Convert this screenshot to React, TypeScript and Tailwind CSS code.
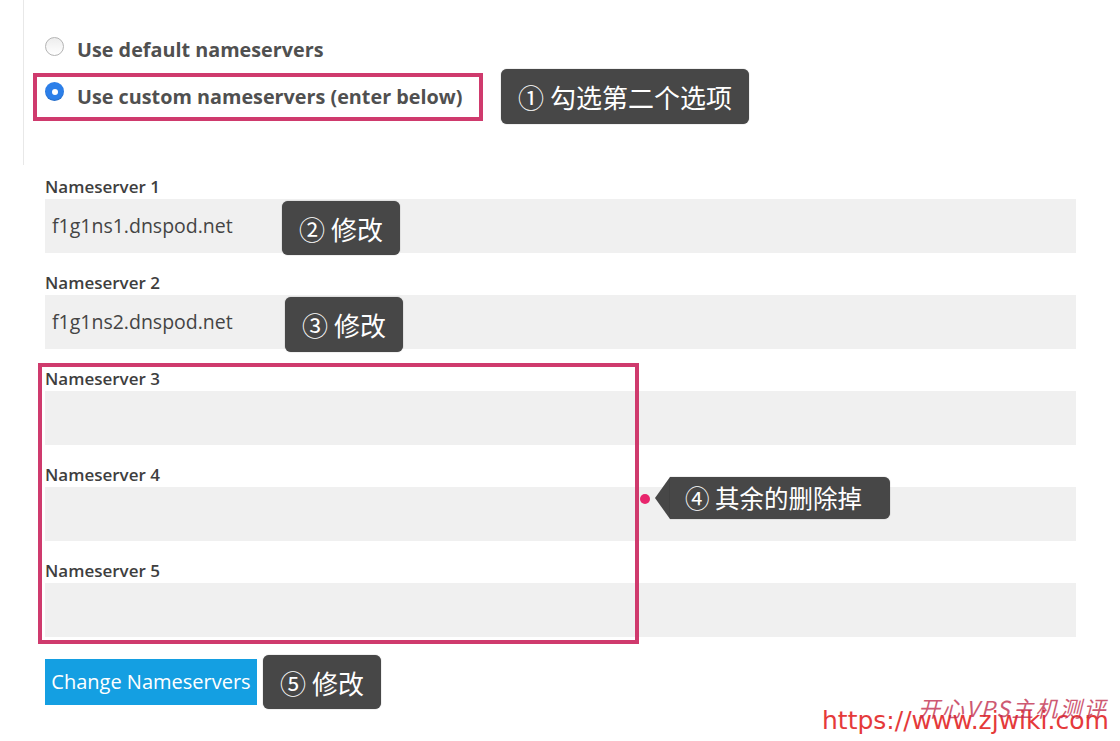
import React from 'react';

const callout =
  "flex items-center justify-center rounded-[6px] bg-[#474747] text-white font-['Noto_Sans_CJK_SC','Noto_Sans',sans-serif] shadow-[0_0_1px_rgba(0,0,0,0.6)]";

function Radio({ checked }: { checked?: boolean }) {
  return checked ? (
    <span className="flex h-[19px] w-[19px] shrink-0 items-center justify-center rounded-full bg-[#2c7fe9] shadow-[inset_0_-1px_1px_rgba(0,0,0,0.15)]">
      <span className="block h-[6px] w-[6px] rounded-full bg-white" />
    </span>
  ) : (
    <span className="block h-[19px] w-[19px] shrink-0 rounded-full border border-[#b4b4b4] bg-gradient-to-b from-[#ededed] to-white" />
  );
}

function Field({
  label,
  value,
  top = 'pt-[18px]',
  children,
}: {
  label: string;
  value?: string;
  top?: string;
  children?: React.ReactNode;
}) {
  return (
    <div className={top}>
      <div className="text-[17px] leading-[24px] font-semibold text-[#3e3e3e]">{label}</div>
      <div className="relative flex h-[54px] w-[1031px] items-center bg-[#f0f0f0] pl-[7px] text-[19.5px] text-[#444]">
        {value}
        {children}
      </div>
    </div>
  );
}

export default function App() {
  return (
    <div className="relative h-[741px] w-[1120px] overflow-hidden bg-white font-['Open_Sans',sans-serif]">
      {/* Radio choice */}
      <div className="ml-[23px] h-[165px] border-l border-[#e8e8e8] pt-[30px] pl-[9px]">
        <div className="flex h-[40px] items-center pl-[12px]">
          <span className="mb-[8px] block">
            <Radio />
          </span>
          <span className="ml-[13px] text-[19.8px] font-bold text-[#505050]">Use default nameservers</span>
        </div>
        <div className="-mt-[1px] flex items-center">
          <div className="flex h-[48px] w-[450px] items-center border-[4px] border-[#cf3a6d] pl-[8px]">
            <span className="mb-[10px] block">
              <Radio checked />
            </span>
            <span className="ml-[13px] text-[19.8px] font-bold text-[#505050]">
              Use custom nameservers (enter below)
            </span>
          </div>
          <div className={`${callout} ml-[18px] h-[55px] w-[248px] text-[26px]`}>① 勾选第二个选项</div>
        </div>
      </div>

      {/* Nameservers */}
      <div className="pl-[45px]">
        <Field label="Nameserver 1" value="f1g1ns1.dnspod.net" top="pt-[10px]">
          <div className={`${callout} absolute left-[237px] top-[2px] h-[54px] w-[118px] text-[26px]`}>② 修改</div>
        </Field>
        <Field label="Nameserver 2" value="f1g1ns2.dnspod.net">
          <div className={`${callout} absolute left-[240px] top-[2px] h-[55px] w-[118px] text-[26px]`}>③ 修改</div>
        </Field>

        <div className="relative">
          <Field label="Nameserver 3" />
          <Field label="Nameserver 4" />
          <Field label="Nameserver 5" />

          <div className="absolute left-[-7px] top-[14px] h-[281px] w-[601px] border-[4px] border-[#cf3a6d]" />
          <div className="absolute left-[595px] top-[145px] h-[10px] w-[10px] rounded-full bg-[#e8256c]" />
          <div className="absolute left-[610px] top-[128px] flex h-[42px] items-center">
            <div className="h-0 w-0 border-y-[21px] border-r-[15px] border-y-transparent border-r-[#474747]" />
            <div className={`${callout} h-[42px] w-[220px] justify-start rounded-l-none pl-[15px] text-[24.5px]`}>
              ④ 其余的删除掉
            </div>
          </div>
        </div>

        <div className="mt-[18px] flex items-center">
          <button className="h-[46px] w-[212px] bg-[#149fe2] text-[20px] text-white">Change Nameservers</button>
          <div className={`${callout} ml-[6px] h-[54px] w-[118px] text-[26px]`}>⑤ 修改</div>
        </div>
      </div>

      {/* Watermark */}
      <div className="absolute bottom-[4px] left-[822px] font-['DejaVu_Sans',sans-serif] text-[25px] leading-[32px] text-[#e53a3a]">
        https://www.zjwiki.com
      </div>
      <div className="absolute bottom-[17px] left-[918px] font-['Noto_Sans_CJK_SC',sans-serif] text-[22px] italic tracking-[2px] text-[#c23050] opacity-80">
        开心VPS主机测评
      </div>
    </div>
  );
}
